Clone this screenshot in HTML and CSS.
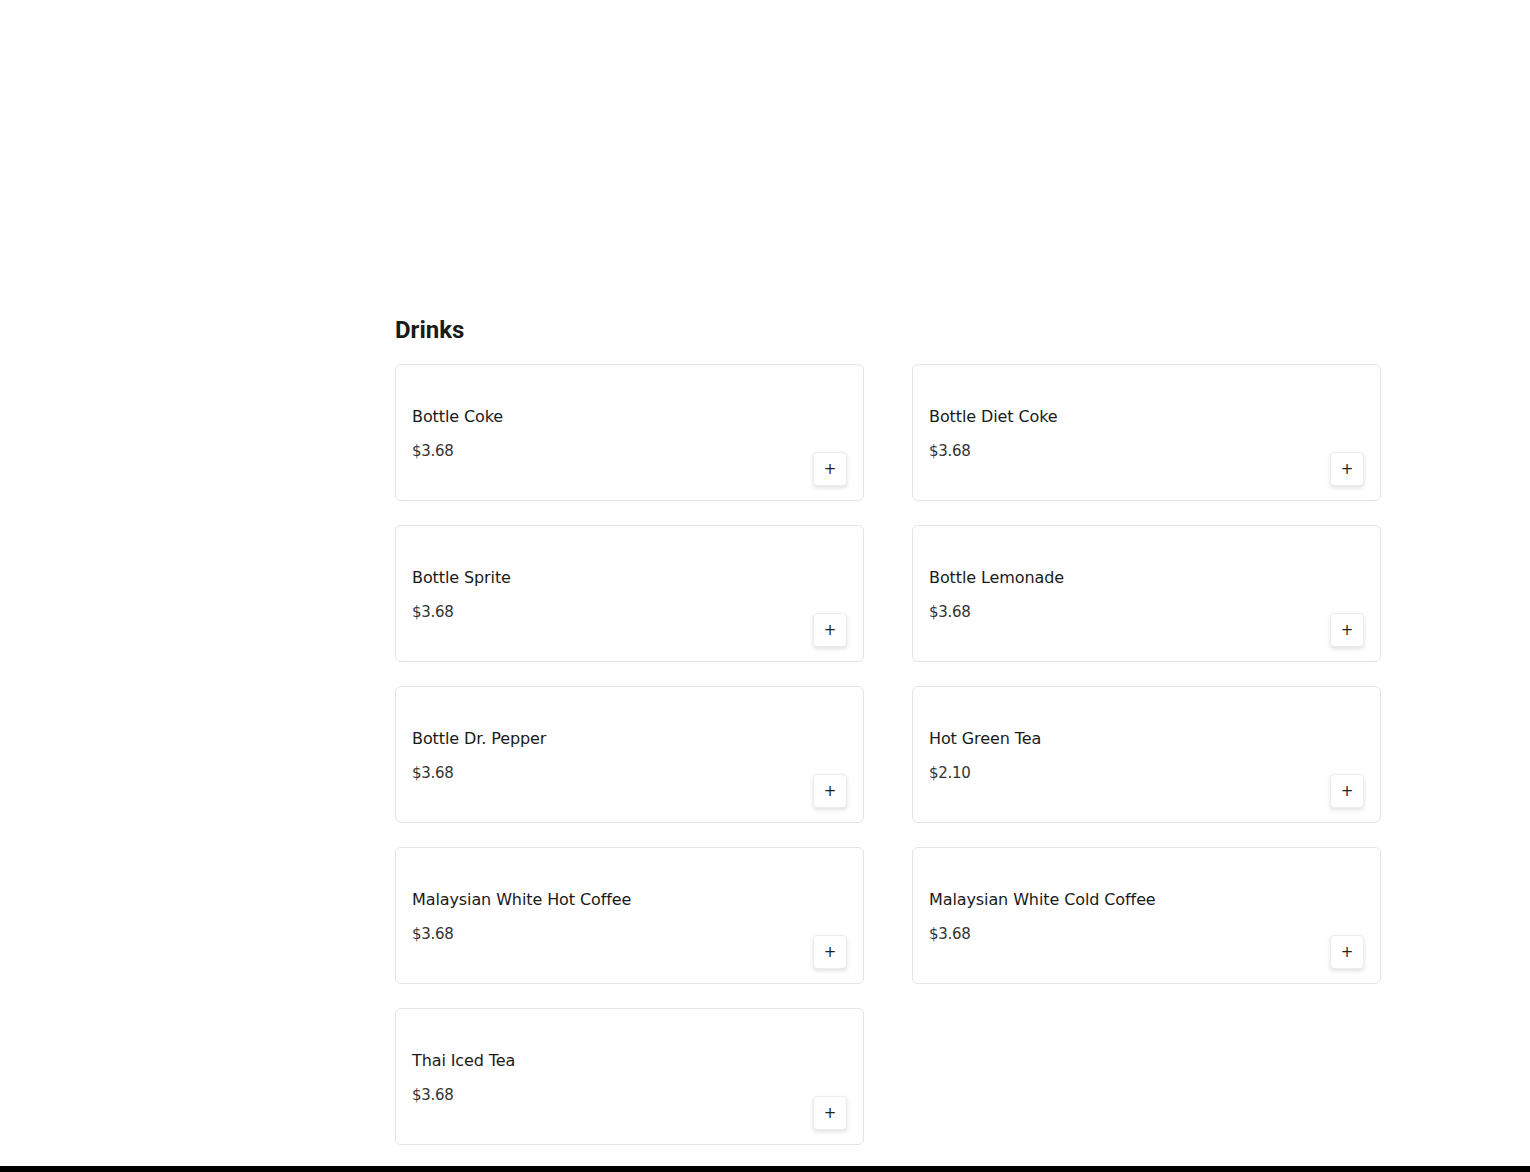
FILE: index.html
```html
<!DOCTYPE html>
<html lang="en">
<head>
  <meta charset="UTF-8" />
  <meta name="viewport" content="width=device-width, initial-scale=1.0"/>
  <title>Menu - Drinks</title>
  <link rel="stylesheet" href="styles.css">
</head>
<body>
  <div class="pagina">
    <div class="hueco"></div>
    <section class="categoria">
      <h2>Drinks</h2>
      <div class="grid">
        <div class="item">
          <div class="info"><h3>Bottle Coke</h3><p>$3.68</p></div>
          <button class="agregar">+</button>
        </div>
        <div class="item">
          <div class="info"><h3>Bottle Diet Coke</h3><p>$3.68</p></div>
          <button class="agregar">+</button>
        </div>
        <div class="item">
          <div class="info"><h3>Bottle Sprite</h3><p>$3.68</p></div>
          <button class="agregar">+</button>
        </div>
        <div class="item">
          <div class="info"><h3>Bottle Lemonade</h3><p>$3.68</p></div>
          <button class="agregar">+</button>
        </div>
        <div class="item">
          <div class="info"><h3>Bottle Dr. Pepper</h3><p>$3.68</p></div>
          <button class="agregar">+</button>
        </div>
        <div class="item">
          <div class="info"><h3>Hot Green Tea</h3><p>$2.10</p></div>
          <button class="agregar">+</button>
        </div>
        <div class="item">
          <div class="info"><h3>Malaysian White Hot Coffee</h3><p>$3.68</p></div>
          <button class="agregar">+</button>
        </div>
        <div class="item">
          <div class="info"><h3>Malaysian White Cold Coffee</h3><p>$3.68</p></div>
          <button class="agregar">+</button>
        </div>
        <div class="item">
          <div class="info"><h3>Thai Iced Tea</h3><p>$3.68</p></div>
          <button class="agregar">+</button>
        </div>
      </div>
    </section>
  </div>
  <div class="barra"></div>
</body>
</html>
```

FILE: styles.css
```css
* { box-sizing: border-box; margin: 0; padding: 0; }
body {
  font-family: 'DejaVu Sans', sans-serif;
  background: #fff;
  color: #1a1a1a;
  height: 100vh;
  display: flex; flex-direction: column;
  overflow: hidden;
}
.pagina { flex-grow: 1; }
.hueco { height: 316px; }
.categoria { width: 986px; margin-left: 395px; }
.categoria h2 {
  font-family: Roboto, sans-serif; font-weight: 700;
  font-size: 24px; line-height: 28px; color: #1a1a1a;
  margin-bottom: 20px;
}
.grid {
  display: grid; grid-template-columns: 1fr 1fr;
  column-gap: 48px; row-gap: 24px;
}
.item {
  height: 137px; border: 1px solid #e4e4e4; border-radius: 6px;
  padding: 16px 16px 14px; display: flex; justify-content: space-between;
  align-items: center;
}
.info h3 {
  font-size: 16px; font-weight: 500; line-height: 20px;
  color: #1a1a1a; margin-bottom: 14px; letter-spacing: -0.1px;
}
.info p { font-size: 15px; line-height: 20px; color: #333; letter-spacing: -0.3px; }
.agregar {
  align-self: flex-end; width: 34px; height: 34px;
  background: #fff; border: 1px solid #ececec; border-radius: 4px;
  box-shadow: 0 2px 4px rgba(0,0,0,0.12);
  font-family: 'DejaVu Sans', sans-serif; font-size: 15px; color: #222;
  cursor: pointer;
}
.barra { height: 6px; background: #000; }
```
